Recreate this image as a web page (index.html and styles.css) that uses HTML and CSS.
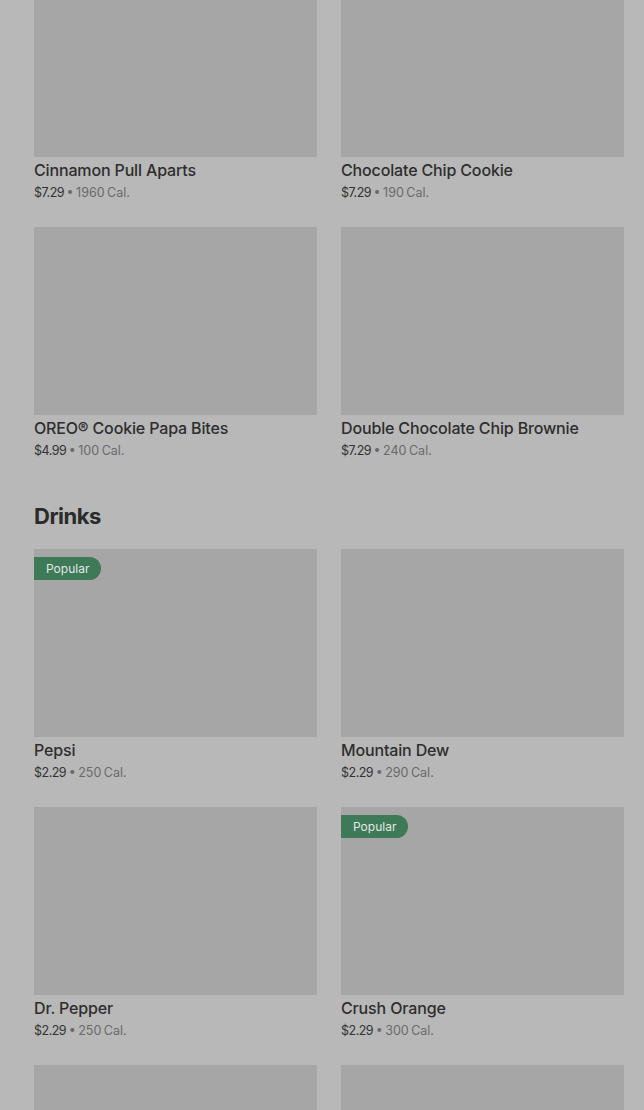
FILE: index.html
```html
<!DOCTYPE html>
<html lang="en">
<head>
<meta charset="UTF-8">
<meta name="viewport" content="width=device-width, initial-scale=1.0">
<title>Menu</title>
<link rel="stylesheet" href="styles.css">
</head>
<body>

<div class="menu">
    <section class="section">
        <div class="grid">
            <div class="item">
                <div class="photo"><span class="badge">Popular</span></div>
                <div class="name">Cinnamon Pull Aparts</div>
                <div class="meta"><span class="price">$7.29</span> • 1960 Cal.</div>
            </div>
            <div class="item">
                <div class="photo"></div>
                <div class="name">Chocolate Chip Cookie</div>
                <div class="meta"><span class="price">$7.29</span> • 190 Cal.</div>
            </div>
            <div class="item">
                <div class="photo"></div>
                <div class="name">OREO® Cookie Papa Bites</div>
                <div class="meta"><span class="price">$4.99</span> • 100 Cal.</div>
            </div>
            <div class="item">
                <div class="photo"></div>
                <div class="name">Double Chocolate Chip Brownie</div>
                <div class="meta"><span class="price">$7.29</span> • 240 Cal.</div>
            </div>
        </div>
    </section>

    <section class="section">
        <h2>Drinks</h2>
        <div class="grid">
            <div class="item">
                <div class="photo"><span class="badge">Popular</span></div>
                <div class="name">Pepsi</div>
                <div class="meta"><span class="price">$2.29</span> • 250 Cal.</div>
            </div>
            <div class="item">
                <div class="photo"></div>
                <div class="name">Mountain Dew</div>
                <div class="meta"><span class="price">$2.29</span> • 290 Cal.</div>
            </div>
            <div class="item">
                <div class="photo"></div>
                <div class="name">Dr. Pepper</div>
                <div class="meta"><span class="price">$2.29</span> • 250 Cal.</div>
            </div>
            <div class="item">
                <div class="photo"><span class="badge">Popular</span></div>
                <div class="name">Crush Orange</div>
                <div class="meta"><span class="price">$2.29</span> • 300 Cal.</div>
            </div>
            <div class="item">
                <div class="photo"></div>
            </div>
            <div class="item">
                <div class="photo"></div>
            </div>
        </div>
    </section>
</div>

</body>
</html>
```

FILE: styles.css
```css
body {
    font-family: Inter, "Noto Sans", sans-serif;
    margin: 0;
    padding: 0;
    background-color: #b8b8b8;
    color: #2e2e2e;
    overflow: hidden;
}

.menu {
    padding: 0 20px 0 34px;
    margin-top: -31px; /* page is scrolled */
}

.section + .section {
    margin-top: 42px;
}

h2 {
    margin: 0 0 19px;
    font-size: 22px;
    line-height: 28px;
    font-weight: 700;
    letter-spacing: -0.5px;
    color: #2b2b2b;
}

.grid {
    display: grid;
    grid-template-columns: 1fr 1fr;
    column-gap: 24px;
    row-gap: 25px;
}

.photo {
    position: relative;
    height: 188px;
    background-color: #a6a6a6;
}

.badge {
    position: absolute;
    top: 8px;
    left: 0;
    height: 23px;
    line-height: 23px;
    padding: 0 12px;
    border-radius: 0 12px 12px 0;
    background-color: #3e7958;
    color: #e2e8e4;
    font-size: 12px;
}

.name {
    margin-top: 3px;
    font-size: 16px;
    line-height: 20px;
    font-weight: 500;
    letter-spacing: -0.15px;
    color: #2e2e2e;
}

.meta {
    margin-top: 4px;
    font-size: 12.5px;
    line-height: 18px;
    color: #6a6a6a;
    word-spacing: -1px;
}

.price {
    color: #333;
    letter-spacing: -0.5px;
}
```
